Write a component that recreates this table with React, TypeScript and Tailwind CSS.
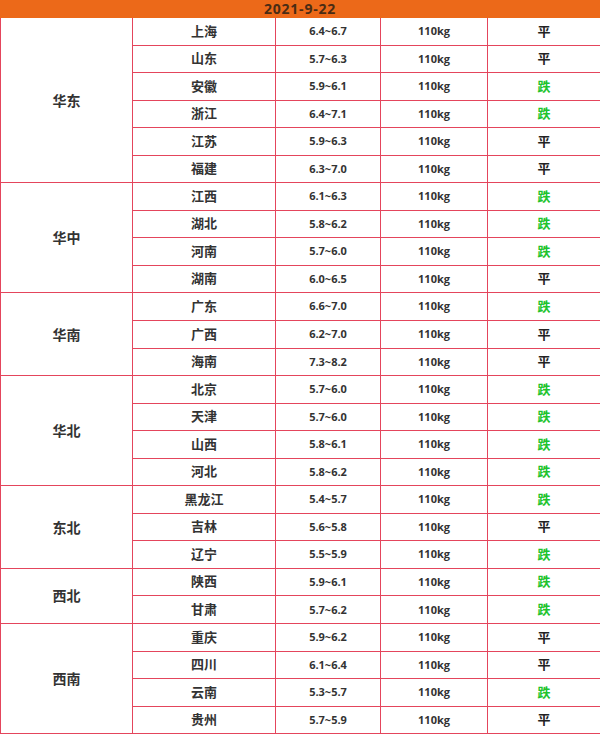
import { Fragment } from "react";

const regions = [
  {
    name: "华东",
    span: "row-span-6",
    rows: [
      ["上海", "6.4~6.7", "平"],
      ["山东", "5.7~6.3", "平"],
      ["安徽", "5.9~6.1", "跌"],
      ["浙江", "6.4~7.1", "跌"],
      ["江苏", "5.9~6.3", "平"],
      ["福建", "6.3~7.0", "平"],
    ],
  },
  {
    name: "华中",
    span: "row-span-4",
    rows: [
      ["江西", "6.1~6.3", "跌"],
      ["湖北", "5.8~6.2", "跌"],
      ["河南", "5.7~6.0", "跌"],
      ["湖南", "6.0~6.5", "平"],
    ],
  },
  {
    name: "华南",
    span: "row-span-3",
    rows: [
      ["广东", "6.6~7.0", "跌"],
      ["广西", "6.2~7.0", "平"],
      ["海南", "7.3~8.2", "平"],
    ],
  },
  {
    name: "华北",
    span: "row-span-4",
    rows: [
      ["北京", "5.7~6.0", "跌"],
      ["天津", "5.7~6.0", "跌"],
      ["山西", "5.8~6.1", "跌"],
      ["河北", "5.8~6.2", "跌"],
    ],
  },
  {
    name: "东北",
    span: "row-span-3",
    rows: [
      ["黑龙江", "5.4~5.7", "跌"],
      ["吉林", "5.6~5.8", "平"],
      ["辽宁", "5.5~5.9", "跌"],
    ],
  },
  {
    name: "西北",
    span: "row-span-2",
    rows: [
      ["陕西", "5.9~6.1", "跌"],
      ["甘肃", "5.7~6.2", "跌"],
    ],
  },
  {
    name: "西南",
    span: "row-span-4",
    rows: [
      ["重庆", "5.9~6.2", "平"],
      ["四川", "6.1~6.4", "平"],
      ["云南", "5.3~5.7", "跌"],
      ["贵州", "5.7~5.9", "平"],
    ],
  },
];

const cell =
  "flex items-center justify-center border-b border-r border-[#e4455c]";

export default function App() {
  return (
    <div
      className="w-[600px] h-[734px] overflow-hidden bg-white text-[#333]"
      style={{ fontFamily: '"Open Sans", "Noto Sans CJK SC", sans-serif' }}
    >
      {/* Date bar */}

      <div className="flex h-[18px] items-center justify-center bg-[#ec6919]">
        <span className="text-[14px] font-bold leading-[18px] tracking-[0.8px] text-[#4a2c14]">
          2021-9-22
        </span>
      </div>

      {/* Price table */}

      <div className="grid grid-cols-[132px_143px_105px_107px_1fr] auto-rows-[27.55px] border-l border-[#e4455c]">
        {regions.map((region) => (
          <Fragment key={region.name}>
            <div
              className={`${region.span} ${cell} text-[14px] font-bold text-[#333]`}
              style={{ gridColumn: 1 }}
            >
              {region.name}
            </div>

            {region.rows.map(([city, price, trend]) => (
              <Fragment key={city}>
                <div
                  className={`${cell} text-[13px] font-bold`}
                  style={{ gridColumn: 2 }}
                >
                  {city}
                </div>

                <div className={`${cell} text-[11px] font-bold`}>
                  {price}
                </div>

                <div className={`${cell} text-[11px] font-bold`}>
                  110kg
                </div>

                <div
                  className={`${cell} border-r-0 text-[13px] font-bold ${
                    trend === "跌" ? "text-[#21c32c]" : "text-[#222]"
                  }`}
                >
                  {trend}
                </div>
              </Fragment>
            ))}
          </Fragment>
        ))}
      </div>
    </div>
  );
}
